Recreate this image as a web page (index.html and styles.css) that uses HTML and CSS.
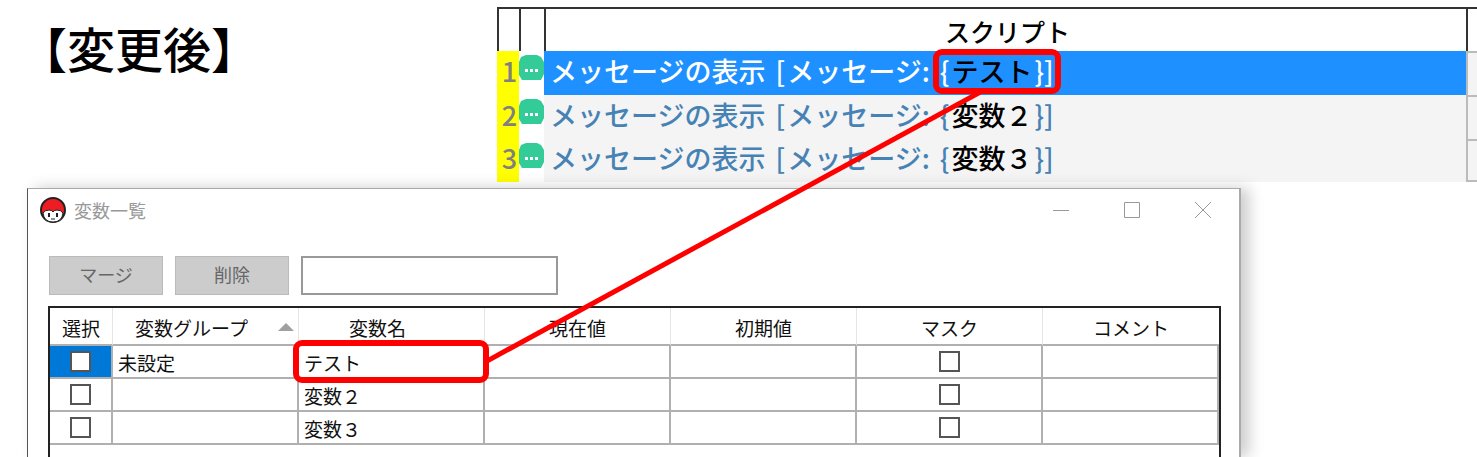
FILE: index.html
```html
<!DOCTYPE html>
<html lang="ja">
<head>
    <meta charset="UTF-8">
    <meta name="viewport" content="width=device-width, initial-scale=1.0">
    <title>変数一覧</title>
    <link rel="stylesheet" href="styles.css">
</head>
<body>

    <!-- Bubble icon shared by the script rows -->
    <svg class="symbols" aria-hidden="true">
        <symbol id="bubble" viewBox="0 0 25 25">
            <path d="M7 0H18L22 2L25 7V19L22 25H3L0 20V7L2 2Z" fill="#33cc99"/>
            <path d="M6 14h3v3h-3zM11 14h3v3h-3zM16 14h3v3h-3z" fill="#fff"/>
        </symbol>
    </svg>

    <div class="top">
        <h1>【変更後】</h1>

        <table class="script-table">
            <colgroup>
                <col class="col-number">
                <col class="col-icon">
                <col>
                <col class="col-rest">
            </colgroup>
            <thead>
                <tr><th></th><th></th><th>スクリプト</th><th></th></tr>
            </thead>
            <tbody>
                <tr class="active">
                    <td class="number">1</td>
                    <td class="icon"><svg><use href="#bubble"/></svg></td>
                    <td class="command">メッセージの表示 <span class="args">[<span class="arg">メッセージ: <span class="value marked">{<b>テスト</b>}]</span></span></span></td>
                    <td class="rest"></td>
                </tr>
                <tr>
                    <td class="number">2</td>
                    <td class="icon"><svg><use href="#bubble"/></svg></td>
                    <td class="command">メッセージの表示 <span class="args">[<span class="arg">メッセージ: <span class="value">{<b>変数２</b>}]</span></span></span></td>
                    <td class="rest"></td>
                </tr>
                <tr>
                    <td class="number">3</td>
                    <td class="icon"><svg><use href="#bubble"/></svg></td>
                    <td class="command">メッセージの表示 <span class="args">[<span class="arg">メッセージ: <span class="value">{<b>変数３</b>}]</span></span></span></td>
                    <td class="rest"></td>
                </tr>
            </tbody>
        </table>
    </div>

    <!-- Variable list window -->
    <main class="window">
        <header class="titlebar">
            <svg class="app-icon" viewBox="0 0 26 26" aria-hidden="true">
                <circle cx="13" cy="13" r="12" fill="#ee1c23" stroke="#222" stroke-width="2"/>
                <path d="M3 16Q5 13 9 13Q12 13 13 15Q14 13 17 13Q21 13 23 16Q22 25 13 25Q4 25 3 16Z" fill="#fff" stroke="#222"/>
                <path d="M9 16v4M17 16v4" stroke="#222" stroke-width="2"/>
                <path d="M11 22h4" stroke="#222"/>
            </svg>
            <h2>変数一覧</h2>
            <div class="window-buttons">
                <button type="button" aria-label="最小化"><svg viewBox="0 0 18 18"><path d="M1 9.5h16"/></svg></button>
                <button type="button" aria-label="最大化"><svg viewBox="0 0 18 18"><path d="M1.5 1.5h15v15h-15z"/></svg></button>
                <button type="button" aria-label="閉じる"><svg viewBox="0 0 18 18"><path d="M1 1l16 16M17 1L1 17"/></svg></button>
            </div>
        </header>

        <div class="toolbar">
            <button type="button">マージ</button>
            <button type="button">削除</button>
            <input type="text" aria-label="検索">
        </div>

        <div class="grid">
            <table class="variables">
                <colgroup>
                    <col class="col-select">
                    <col class="col-data">
                    <col class="col-data">
                    <col class="col-data">
                    <col class="col-data">
                    <col class="col-data">
                    <col>
                </colgroup>
                <thead>
                    <tr>
                        <th>選択</th>
                        <th class="sortable sorted">変数グループ</th>
                        <th class="sortable">変数名</th>
                        <th>現在値</th>
                        <th>初期値</th>
                        <th>マスク</th>
                        <th>コメント</th>
                    </tr>
                </thead>
                <tbody>
                    <tr>
                        <td class="check selected"><input type="checkbox" aria-label="テストを選択"></td>
                        <td>未設定</td>
                        <td class="marked">テスト</td>
                        <td></td>
                        <td></td>
                        <td class="check"><input type="checkbox" aria-label="テストをマスク"></td>
                        <td></td>
                    </tr>
                    <tr>
                        <td class="check"><input type="checkbox" aria-label="変数２を選択"></td>
                        <td></td>
                        <td>変数２</td>
                        <td></td>
                        <td></td>
                        <td class="check"><input type="checkbox" aria-label="変数２をマスク"></td>
                        <td></td>
                    </tr>
                    <tr>
                        <td class="check"><input type="checkbox" aria-label="変数３を選択"></td>
                        <td></td>
                        <td>変数３</td>
                        <td></td>
                        <td></td>
                        <td class="check"><input type="checkbox" aria-label="変数３をマスク"></td>
                        <td></td>
                    </tr>
                </tbody>
            </table>
        </div>
    </main>

    <!-- Line joining the two marked names -->
    <svg class="connector" viewBox="0 0 500 275" aria-hidden="true">
        <path d="M0 273L499 1"/>
    </svg>

</body>
</html>
```
FILE: styles.css
```css
/* Basic Reset */
* {
    margin: 0;
    padding: 0;
    box-sizing: border-box;
}

body {
    position: relative;
    display: flex;
    flex-direction: column;
    height: 100vh;
    overflow: hidden;
    background-color: #fff;
    color: #111;
    font-family: "Noto Sans CJK JP", sans-serif;
    font-size: 18px;
}

button,
input {
    font: inherit;
}

table {
    table-layout: fixed;
    border-collapse: separate;
    border-spacing: 0;
}

.symbols {
    position: absolute;
    width: 0;
    height: 0;
}

/* Heading and script list */
.top {
    display: flex;
    justify-content: space-between;
    padding: 7px 0 6px 19px;
}

h1 {
    padding: 4px 0 0;
    margin-right: 1px;
    font-size: 48px;
    font-weight: 500;
    line-height: 72px;
    color: #000;
}

.script-table {
    flex: 1;
    max-width: 980px;
    font-size: 27px;
    font-weight: 500;
    line-height: 38px;
}

.col-number {
    width: 22px;
}

.col-icon {
    width: 25px;
}

.col-rest {
    width: 11px;
}

.script-table th {
    height: 44px;
    padding: 2px 0 0 3px;
    border-top: 2px solid #333;
    border-left: 2px solid #333;
    font-size: 25px;
    font-weight: 500;
    color: #000;
}

.script-table td {
    height: 44px;
    padding-bottom: 5px;
}

.script-table tr:last-child td {
    height: 43px;
}

.script-table .number {
    padding-left: 3px;
    background-color: #ff0;
    color: #808080;
    text-align: center;
}

.icon {
    vertical-align: top;
}

.icon svg {
    display: block;
    width: 25px;
    height: 25px;
    margin-top: 4px;
}

.command {
    padding-left: 6px;
    background-color: #f4f4f4;
    color: #4682b4;
    white-space: nowrap;
}

.args,
.value {
    margin-left: 4px;
}

.arg {
    margin-left: 2px;
}

.command b {
    margin: 0 2px;
    color: #000;
    font-weight: 500;
}

.active .command {
    background-color: #1e90ff;
    color: #fff;
}

.rest {
    border-top: 2px solid #bbb;
    border-left: 2px solid #bbb;
    background-color: #f4f4f4;
}

tr:last-child .rest {
    border-bottom: 2px solid #bbb;
}

/* Window */
.window {
    flex: 1;
    display: flex;
    flex-direction: column;
    margin: 0 236px 0 27px;
    padding: 0 18px 0 20px;
    border: solid #aaa;
    border-width: 1px 2px 0 1px;
    border-left-color: #555;
    background-color: #fff;
    box-shadow: 8px 0 14px rgba(0, 0, 0, 0.2);
}

.titlebar {
    display: flex;
    align-items: center;
    height: 42px;
    margin-left: -8px;
}

.app-icon {
    width: 26px;
    height: 26px;
    margin-right: 8px;
}

h2 {
    flex: 1;
    font-size: 18px;
    font-weight: 400;
    color: #999;
}

.window-buttons {
    display: flex;
    gap: 53px;
    margin-right: 9px;
}

.window-buttons button {
    width: 18px;
    height: 18px;
    border: 0;
    background: none;
}

.window-buttons svg {
    display: block;
    fill: none;
    stroke: #999;
}

.toolbar {
    display: flex;
    gap: 12px;
    margin: 25px 0 0 1px;
}

.toolbar button {
    width: 114px;
    height: 39px;
    padding-bottom: 3px;
    border: 1px solid #bbb;
    background-color: #ccc;
    color: #666;
}

.toolbar input {
    width: 257px;
    height: 39px;
    padding: 0 8px;
    border: 2px solid #999;
    background-color: #fff;
}

/* Variable grid */
.grid {
    flex: 1;
    margin-top: 11px;
    border: solid #222;
    border-width: 2px 2px 0;
    font-size: 19px;
}

.variables {
    width: 100%;
}

.col-select {
    width: 63px;
}

.col-data {
    width: 186px;
}

.variables th {
    height: 38px;
    padding-top: 3px;
    border-right: 1px solid #e5e5e5;
    border-bottom: 2px solid #b0b0b0;
    font-weight: 400;
    line-height: 28px;
}

.variables th:last-child {
    border-right: 0;
}

.variables .sortable {
    position: relative;
    padding-right: 28px;
}

/* Sort arrow at the right edge of the header */
.sorted::after {
    content: "";
    position: absolute;
    top: 15px;
    right: 4px;
    border: 8px solid transparent;
    border-top: 0;
    border-bottom: 8px solid #a0a0a0;
}

.variables td {
    height: 33px;
    padding: 3px 5px 0;
    border-right: 2px solid #b0b0b0;
    border-bottom: 2px solid #b0b0b0;
    line-height: 26px;
}

.variables .check {
    padding: 0;
    text-align: center;
    vertical-align: middle;
}

.variables .selected {
    background-color: #0078d7;
}

.check input {
    appearance: none;
    display: block;
    width: 21px;
    height: 21px;
    margin: 0 auto;
    border: 2px solid #555;
    background-color: #fff;
}

/* Red markers */
.marked {
    position: relative;
}

.marked::after {
    content: "";
    position: absolute;
    inset: -6px -6px -6px;
    border: 6px solid #f00;
    border-radius: 9px;
}

.value.marked::after {
    inset: -2px -7px -4px;
}

.connector {
    position: absolute;
    top: 88px;
    left: 487px;
    width: 500px;
    height: 275px;
    fill: none;
    stroke: #f00;
    stroke-width: 5;
    pointer-events: none;
}
```
